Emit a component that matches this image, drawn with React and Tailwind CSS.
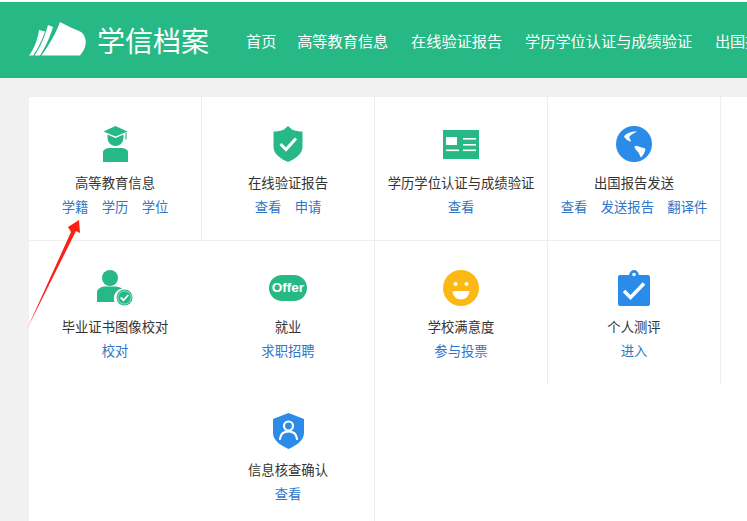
function Icon({ name }) {
  if (name === "grad")
    return (
      <svg viewBox="0 0 25 36" className="w-[25px] h-9">
        <path d="M12.500 0 L24.500 5.500 L12.500 10.500 L0.500 5.500 Z" fill="#27b985" />
        <rect x="22" y="6.500" width="2" height="7" fill="#7fd6b8" />
        <path d="M4.500 8.500 L12.500 12 L20.500 8.500 V12 A8 8 0 1 1 4.500 12 Z" fill="#27b985" />
        <path d="M0 36 V26 C0 23.500 4 22 7 22 H18 C21 22 25 23.500 25 26 V36 Z" fill="#27b985" />
      </svg>
    );
  if (name === "shield")
    return (
      <svg viewBox="0 0 30 36" className="w-[30px] h-9">
        <path d="M15 0 L19 3.500 C22 5 26 5.500 29.500 5.500 V21 C29.500 28 22 33 15 36 C8 33 0.500 28 0.500 21 V5.500 C4 5.500 8 5 11 3.500 Z" fill="#27b985" />
        <path d="M7.500 18 L13 23.500 L23 12.500" fill="none" stroke="#fff" strokeWidth="3" />
      </svg>
    );
  if (name === "card")
    return (
      <svg viewBox="0 0 36 29" className="w-9 h-[29px]">
        <rect width="36" height="29" fill="#27b985" />
        <rect x="3" y="7" width="11" height="8" fill="#fff" />
        <rect x="3" y="19.500" width="13" height="1.600" fill="#fff" />
        <rect x="20" y="8" width="13" height="1.600" fill="#fff" />
        <rect x="20" y="14" width="13" height="1.600" fill="#fff" />
        <rect x="20" y="19.500" width="13" height="1.600" fill="#fff" />
      </svg>
    );
  if (name === "globe")
    return (
      <svg viewBox="0 0 36 36" className="w-9 h-9">
        <circle cx="18" cy="18" r="18" fill="#2b8be8" />
        <path d="M8 10.500 C10 7.500 15 5 21 5.500 C18 7.500 14.500 8.500 13.500 10.500 C13 12 14.500 13.500 15 15.500 C12.500 15.500 9.500 13 8 10.500 Z" fill="#fff" />
        <path d="M18.500 20.500 C20 19 22 20.500 24 21 C26 21.500 28 22 29.500 23 C29 26 27 29.500 25 31.500 C23.500 30 23.500 27.500 22 26 C20.500 24.500 18.500 22.500 18.500 20.500 Z" fill="#fff" />
      </svg>
    );
  if (name === "user")
    return (
      <svg viewBox="0 0 36 36" className="w-9 h-9">
        <circle cx="13" cy="8" r="8" fill="#27b985" />
        <path d="M0 32 V22 C0 19 4 16.500 8 16.500 H18 C21 16.500 24 18 25.500 18.500 A10 10 0 0 0 17.500 32 Z" fill="#27b985" />
        <circle cx="27.500" cy="27.500" r="8" fill="#27b985" />
        <circle cx="27.500" cy="27.500" r="6.600" fill="none" stroke="#bfeadb" strokeWidth="0.700" />
        <path d="M23.700 27.500 L26.500 30.300 L31.300 25" fill="none" stroke="#fff" strokeWidth="1.800" />
      </svg>
    );
  if (name === "offer")
    return (
      <div className="w-[38px] h-[26px] rounded-[13px] bg-[#27b985] text-white text-[13.500px] font-bold flex items-center justify-center font-['Liberation_Sans',sans-serif]">
        Offer
      </div>
    );
  if (name === "smile")
    return (
      <svg viewBox="0 0 36 36" className="w-9 h-9">
        <circle cx="18" cy="18" r="18" fill="#fdb913" />
        <circle cx="12.500" cy="14" r="2" fill="#fff" />
        <circle cx="23.500" cy="14" r="2" fill="#fff" />
        <path d="M9.500 21 H26.500 C26 26.500 22.500 29.500 18 29.500 C13.500 29.500 10 26.500 9.500 21 Z" fill="#fff" />
      </svg>
    );
  if (name === "clip")
    return (
      <svg viewBox="0 0 32 36" className="w-8 h-9">
        <path d="M2 5 H11 C11.500 2 13.500 0 16 0 C18.500 0 20.500 2 21 5 H30 A2 2 0 0 1 32 7 V34 A2 2 0 0 1 30 36 H2 A2 2 0 0 1 0 34 V7 A2 2 0 0 1 2 5 Z" fill="#2b8be8" />
        <circle cx="16" cy="4.500" r="1.800" fill="#fff" />
        <path d="M6 21 L12.500 27.500 L26 13.500" fill="none" stroke="#fff" strokeWidth="3.500" />
      </svg>
    );
  return (
    <svg viewBox="0 0 31 36" className="w-[31px] h-9">
      <path d="M15.500 0 L31 6 V20 C31 28 22 33 15.500 36 C9 33 0 28 0 20 V6 Z" fill="#2b8be8" />
      <circle cx="15.500" cy="13" r="4.500" fill="none" stroke="#fff" strokeWidth="2.200" />
      <path d="M7 26 C7.500 21 11 18.500 15.500 18.500 C20 18.500 23.500 21 24 26" fill="none" stroke="#fff" strokeWidth="2.200" strokeLinecap="round" />
    </svg>
  );
}

function Cell({ icon, title, links, right = true, bottom = false }) {
  return (
    <div
      className={`h-full flex flex-col items-center pt-[29px] ${right ? "border-r border-[#eeeeee]" : "border-r border-transparent"} ${bottom ? "border-b border-[#eeeeee]" : ""}`}
    >
      <div className="h-9 flex items-center justify-center">
        <Icon name={icon} />
      </div>
      <div className="mt-[11px] text-[13.330px] leading-5 text-[#333333] whitespace-nowrap">{title}</div>
      <div className="mt-1 flex gap-[13.330px] text-[13.330px] leading-5 text-[#2d76c9] whitespace-nowrap">
        {links.map((l) => (
          <a key={l}>{l}</a>
        ))}
      </div>
    </div>
  );
}

export default function App() {
  return (
    <div className="relative w-[747px] h-[521px] overflow-hidden bg-[#f1f1f1] font-['Noto_Sans_CJK_SC','Liberation_Sans',sans-serif]">
      <div className="h-[2px] bg-white" />
      <header className="h-[76px] flex items-center bg-[#27b985] whitespace-nowrap">
        <svg viewBox="0 0 58 34" className="ml-[29px] mt-[-2px] w-[58px] h-[34px] shrink-0">
          <path d="M0 33.500 C5 27 8.500 18 10 8 L16 9.500 C13 18 9 27 4 33.500 Z" fill="#fff" />
          <path d="M5.500 33.500 C11 26 16 14 19 3 L24 5 C21 15 16 26 11 33.500 Z" fill="#fff" />
          <path d="M12.500 33.500 C20 23 27 11 31 0 C38 4 46 7 52 10 C56 13 58 19 56 25 C55 28 53 31 51 33.500 Z" fill="#fff" />
        </svg>
        <div className="ml-[10px] w-[112px] text-[28px] leading-none text-white font-normal">学信档案</div>
        <nav className="ml-[37px] flex gap-[22.800px] text-[15.200px] text-white">
          <span className="mr-[-2px]">首页</span>
          <span>高等教育信息</span>
          <span>在线验证报告</span>
          <span>学历学位认证与成绩验证</span>
          <span>出国报告发送</span>
        </nav>
      </header>
      <main className="mt-[19px] ml-[29px] bg-white h-[424px] grid grid-cols-[173px_173px_173px_173px_1fr] grid-rows-[144px_143px_137px]">
        <div className="border-b border-[#eeeeee] col-span-4 row-start-1 col-start-1" />
        <div className="row-start-1 col-start-1"><Cell icon="grad" title="高等教育信息" links={["学籍", "学历", "学位"]} /></div>
        <div className="row-start-1 col-start-2"><Cell icon="shield" title="在线验证报告" links={["查看", "申请"]} /></div>
        <div className="row-start-1 col-start-3"><Cell icon="card" title="学历学位认证与成绩验证" links={["查看"]} /></div>
        <div className="row-start-1 col-start-4"><Cell icon="globe" title="出国报告发送" links={["查看", "发送报告", "翻译件"]} /></div>
        <div className="row-start-2 col-start-1"><Cell icon="user" title="毕业证书图像校对" links={["校对"]} right={false} bottom /></div>
        <div className="row-start-2 col-start-2"><Cell icon="offer" title="就业" links={["求职招聘"]} /></div>
        <div className="row-start-2 col-start-3"><Cell icon="smile" title="学校满意度" links={["参与投票"]} /></div>
        <div className="row-start-2 col-start-4"><Cell icon="clip" title="个人测评" links={["进入"]} /></div>
        <div className="row-start-3 col-start-2"><Cell icon="shield2" title="信息核查确认" links={["查看"]} /></div>
      </main>
      <svg viewBox="0 0 747 521" className="absolute inset-0 w-[747px] h-[521px] pointer-events-none">
        <path d="M27 329 L71 232 L68 227 L79 220 L80 233 L76 231 Z" fill="#fb1f14" />
      </svg>
    </div>
  );
}
